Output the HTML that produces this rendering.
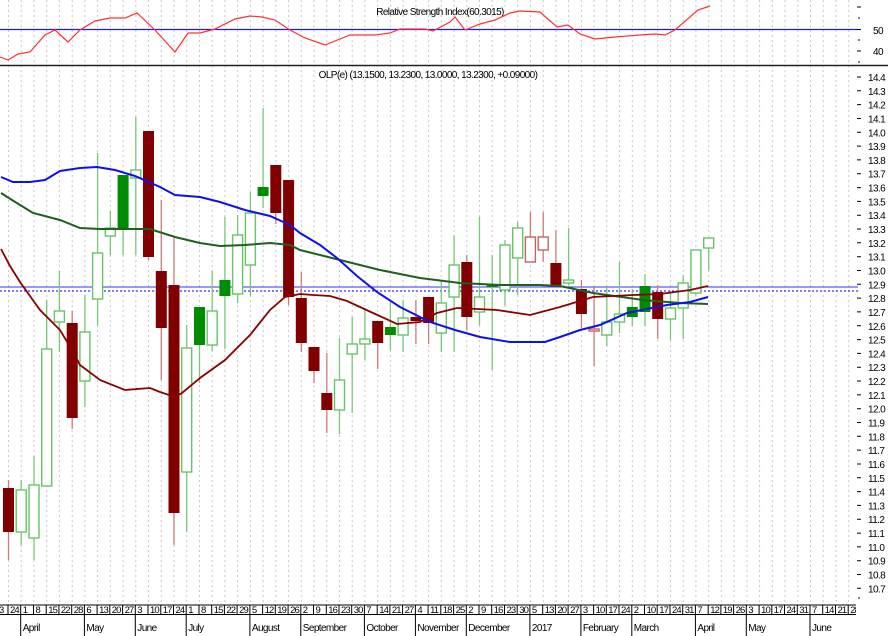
<!DOCTYPE html>
<html><head><meta charset="utf-8"><style>
html,body{margin:0;padding:0;background:#fff;}
svg{display:block;font-family:"Liberation Sans",sans-serif;}
.t{font-size:10px;letter-spacing:-0.6px;fill:#000;}
.d{font-size:9.5px;letter-spacing:-0.9px;fill:#000;}
</style></head><body>
<svg width="888" height="636" viewBox="0 0 888 636" xmlns="http://www.w3.org/2000/svg">
<rect width="888" height="636" fill="#fff"/>
<g stroke="#c8c8c8" stroke-width="1" stroke-dasharray="2,3">
<path d="M8.5 0V605M21.2 0V605M34 0V605M46.7 0V605M59.4 0V605M72.2 0V605M84.9 0V605M97.6 0V605M110.3 0V605M123.1 0V605M135.8 0V605M148.5 0V605M161.3 0V605M174 0V605M186.7 0V605M199.5 0V605M212.2 0V605M224.9 0V605M237.6 0V605M250.4 0V605M263.1 0V605M275.8 0V605M288.6 0V605M301.3 0V605M314 0V605M326.8 0V605M339.5 0V605M352.2 0V605M364.9 0V605M377.7 0V605M390.4 0V605M403.1 0V605M415.9 0V605M428.6 0V605M441.3 0V605M454.1 0V605M466.8 0V605M479.5 0V605M492.2 0V605M505 0V605M517.7 0V605M530.4 0V605M543.2 0V605M555.9 0V605M568.6 0V605M581.4 0V605M594.1 0V605M606.8 0V605M619.5 0V605M632.3 0V605M645 0V605M657.7 0V605M670.5 0V605M683.2 0V605M695.9 0V605M708.7 0V605M721.4 0V605M734.1 0V605M746.9 0V605M759.6 0V605M772.3 0V605M785 0V605M797.8 0V605M810.5 0V605M823.2 0V605M836 0V605M848.7 0V605"/>
</g>
<text x="440" y="15" class="t" text-anchor="middle">Relative Strength Index(60.3015)</text>
<line x1="0" y1="29.5" x2="858" y2="29.5" stroke="#1a1aff" stroke-width="1.2"/>
<polyline fill="none" stroke="#ff3030" stroke-width="1.2" points="0,57 8,60 18,54 30,52 45,35 55,30 68,42 80,30 95,21 110,18 125,18 137,13 155,30 175,52 188,33 200,33 215,29 235,19 250,16 262,17 275,20 290,30 305,38 325,45 350,35 375,35 390,33 400,29 425,29 433,31 450,22 455,17 465,30 480,24 495,20 510,13 520,11 540,12 557,27 568,25 580,34 595,39 615,37 640,35 655,34 665,35 675,30 698,10 710,6"/>
<g stroke="#000" stroke-width="1"><path d="M857 7H861M858 18H860M857 29.5H861M858 40H860M857 51H861M858 62H860"/></g>
<text x="873" y="34" class="t">50</text>
<text x="873" y="55" class="t">40</text>
<line x1="0" y1="65.5" x2="888" y2="65.5" stroke="#222" stroke-width="1.5"/>
<text x="428" y="78" class="t" text-anchor="middle">OLP(e) (13.1500, 13.2300, 13.0000, 13.2300, +0.09000)</text>
<line x1="0" y1="287" x2="858" y2="287" stroke="#3030ff" stroke-width="1"/>
<line x1="0" y1="291" x2="858" y2="291" stroke="#3030ff" stroke-width="1.2" stroke-dasharray="2,2"/>
<g stroke="#d07a7a" stroke-width="1.3">
<path d="M8.5 480V560M72.2 311V429M148.5 131V260M161.3 200V380M174 238V545M275.8 165V224M288.6 180V305M301.3 272V352M314 347V383M326.8 353V433M377.7 321V369M415.9 300V344M428.6 297V344M466.8 255V330M530.4 212V262M543.2 212V262M555.9 230V285M581.4 280V328M594.1 287V366M657.7 285V339"/>
</g>
<g stroke="#78c878" stroke-width="1.3">
<path d="M21.2 480V545M34 456V560M46.7 300V486M59.4 271V352M84.9 295V407M97.6 153V325M110.3 211V255M123.1 175V255M135.8 117V255M186.7 325V532M199.5 307V383M212.2 271V351M224.9 217V349M237.6 215V303M250.4 192V296M263.1 108V208M339.5 338V434M352.2 317V413M364.9 310V360M390.4 302V350M403.1 300V352M441.3 280V352M454.1 235V352M479.5 217V325M492.2 255V370M505 240V306M517.7 222V295M568.6 228V285M606.8 287V346M619.5 262V333M632.3 289V326M645 274V326M670.5 292V340M683.2 275V339M695.9 250V296M708.7 238V270"/>
</g>
<g fill="#800000">
<rect x="3" y="488" width="11" height="44"/>
<rect x="66.7" y="323" width="11" height="95"/>
<rect x="143" y="131" width="11" height="126"/>
<rect x="155.8" y="271" width="11" height="57"/>
<rect x="168.5" y="285" width="11" height="228"/>
<rect x="270.3" y="165" width="11" height="48"/>
<rect x="283.1" y="180" width="11" height="117"/>
<rect x="295.8" y="298" width="11" height="45"/>
<rect x="308.5" y="347" width="11" height="24"/>
<rect x="321.3" y="393" width="11" height="17"/>
<rect x="372.2" y="321" width="11" height="22"/>
<rect x="410.4" y="317" width="11" height="4"/>
<rect x="423.1" y="297" width="11" height="26"/>
<rect x="461.3" y="262" width="11" height="55"/>
<rect x="550.4" y="263" width="11" height="22"/>
<rect x="575.9" y="289" width="11" height="25"/>
<rect x="652.2" y="292" width="11" height="27"/>
</g>
<g fill="#008c00">
<rect x="117.6" y="175" width="11" height="53"/>
<rect x="194" y="307" width="11" height="38"/>
<rect x="219.4" y="280" width="11" height="16"/>
<rect x="257.6" y="187" width="11" height="9"/>
<rect x="384.9" y="327" width="11" height="8"/>
<rect x="486.7" y="284" width="11" height="3"/>
<rect x="626.8" y="307" width="11" height="10"/>
<rect x="639.5" y="286" width="11" height="26"/>
</g>
<g fill="#fff" stroke="#66c466" stroke-width="1.4">
<rect x="16.2" y="490" width="10" height="42"/>
<rect x="29" y="485" width="10" height="53"/>
<rect x="41.7" y="349" width="10" height="137"/>
<rect x="54.4" y="311" width="10" height="11"/>
<rect x="79.9" y="332" width="10" height="49"/>
<rect x="92.6" y="253" width="10" height="46"/>
<rect x="105.3" y="228" width="10" height="8"/>
<rect x="130.8" y="170" width="10" height="8"/>
<rect x="181.7" y="348" width="10" height="124"/>
<rect x="207.2" y="311" width="10" height="34"/>
<rect x="232.6" y="235" width="10" height="59"/>
<rect x="245.4" y="213" width="10" height="52"/>
<rect x="334.5" y="380" width="10" height="30"/>
<rect x="347.2" y="344" width="10" height="10"/>
<rect x="359.9" y="339" width="10" height="5"/>
<rect x="398.1" y="318" width="10" height="17"/>
<rect x="436.3" y="303" width="10" height="30"/>
<rect x="449.1" y="265" width="10" height="32"/>
<rect x="474.5" y="297" width="10" height="15"/>
<rect x="500" y="245" width="10" height="45"/>
<rect x="512.7" y="228" width="10" height="30"/>
<rect x="563.6" y="280" width="10" height="3"/>
<rect x="601.8" y="322" width="10" height="13"/>
<rect x="614.5" y="314" width="10" height="8"/>
<rect x="665.5" y="308" width="10" height="11"/>
<rect x="678.2" y="283" width="10" height="25"/>
<rect x="690.9" y="250" width="10" height="43"/>
<rect x="703.7" y="238" width="10" height="10"/>
</g>
<g fill="#fff" stroke="#c06464" stroke-width="1.4">
<rect x="525.4" y="237" width="10" height="25"/>
<rect x="538.2" y="237" width="10" height="13"/>
<rect x="589.1" y="329" width="10" height="2"/>
</g>
<polyline fill="none" stroke="#1f5f1f" stroke-width="2" points="1,193 12,200 33,213 60,220 80,228 100,229 125,229 150,229 175,237 200,243 220,246 245,245 270,243 290,245 300,250 340,260 380,270 420,278 460,283 500,285 540,285 560,286 593,293 643,300 680,303 708,304"/>
<polyline fill="none" stroke="#8b0000" stroke-width="1.8" points="1,249 10,266 20,282 40,310 60,330 72,350 80,365 100,380 125,390 150,388 160,392 175,397 182,393 200,378 225,360 250,335 270,310 285,297 300,294 313,295 330,296 347,301 373,313 397,324 420,322 437,313 457,308 497,310 530,315 560,307 593,297 633,295 660,294 690,290 708,286"/>
<polyline fill="none" stroke="#1010ee" stroke-width="2" points="1,177 13,182 30,182 45,180 60,171 80,168 97,167 115,170 135,176 160,187 175,195 200,197 220,202 245,210 270,216 290,225 300,233 320,245 337,258 357,276 377,292 400,307 430,322 455,330 480,337 510,342 530,342 545,342 560,337 580,330 600,325 627,313 667,305 690,302 708,297"/>
<g stroke="#000" stroke-width="1">
<path d="M857 77H861M857 90.8H861M857 104.6H861M857 118.5H861M857 132.3H861M857 146.1H861M857 159.9H861M857 173.7H861M857 187.6H861M857 201.4H861M857 215.2H861M857 229H861M857 242.8H861M857 256.7H861M857 270.5H861M857 284.3H861M857 298.1H861M857 311.9H861M857 325.8H861M857 339.6H861M857 353.4H861M857 367.2H861M857 381H861M857 394.9H861M857 408.7H861M857 422.5H861M857 436.3H861M857 450.1H861M857 464H861M857 477.8H861M857 491.6H861M857 505.4H861M857 519.2H861M857 533.1H861M857 546.9H861M857 560.7H861M857 574.5H861M857 588.3H861M858 598H860"/>
</g>
<g class="t">
<text x="868" y="81">14.4</text><text x="868" y="94.8">14.3</text><text x="868" y="108.6">14.2</text><text x="868" y="122.5">14.1</text><text x="868" y="136.3">14.0</text><text x="868" y="150.1">13.9</text><text x="868" y="163.9">13.8</text><text x="868" y="177.7">13.7</text><text x="868" y="191.6">13.6</text><text x="868" y="205.4">13.5</text><text x="868" y="219.2">13.4</text><text x="868" y="233">13.3</text><text x="868" y="246.8">13.2</text><text x="868" y="260.7">13.1</text><text x="868" y="274.5">13.0</text><text x="868" y="288.3">12.9</text><text x="868" y="302.1">12.8</text><text x="868" y="315.9">12.7</text><text x="868" y="329.8">12.6</text><text x="868" y="343.6">12.5</text><text x="868" y="357.4">12.4</text><text x="868" y="371.2">12.3</text><text x="868" y="385">12.2</text><text x="868" y="398.9">12.1</text><text x="868" y="412.7">12.0</text><text x="868" y="426.5">11.9</text><text x="868" y="440.3">11.8</text><text x="868" y="454.1">11.7</text><text x="868" y="468">11.6</text><text x="868" y="481.8">11.5</text><text x="868" y="495.6">11.4</text><text x="868" y="509.4">11.3</text><text x="868" y="523.2">11.2</text><text x="868" y="537.1">11.1</text><text x="868" y="550.9">11.0</text><text x="868" y="564.7">10.9</text><text x="868" y="578.5">10.8</text><text x="868" y="592.3">10.7</text>
</g>
<line x1="0" y1="605" x2="856" y2="605" stroke="#000" stroke-width="1"/>
<line x1="0" y1="614.5" x2="856" y2="614.5" stroke="#000" stroke-width="1"/>
<g transform="translate(1,0)">
<g stroke="#000" stroke-width="1">
<path d="M7 605V614M19.7 605V614M32.5 605V614M45.2 605V614M57.9 605V614M70.7 605V614M83.4 605V614M96.1 605V614M108.8 605V614M121.6 605V614M134.3 605V614M147 605V614M159.8 605V614M172.5 605V614M185.2 605V614M198 605V614M210.7 605V614M223.4 605V614M236.1 605V614M248.9 605V614M261.6 605V614M274.3 605V614M287.1 605V614M299.8 605V614M312.5 605V614M325.3 605V614M338 605V614M350.7 605V614M363.4 605V614M376.2 605V614M388.9 605V614M401.6 605V614M414.4 605V614M427.1 605V614M439.8 605V614M452.6 605V614M465.3 605V614M478 605V614M490.7 605V614M503.5 605V614M516.2 605V614M528.9 605V614M541.7 605V614M554.4 605V614M567.1 605V614M579.9 605V614M592.6 605V614M605.3 605V614M618 605V614M630.8 605V614M643.5 605V614M656.2 605V614M669 605V614M681.7 605V614M694.4 605V614M707.2 605V614M719.9 605V614M732.6 605V614M745.3 605V614M758.1 605V614M770.8 605V614M783.5 605V614M796.3 605V614M809 605V614M821.7 605V614M834.5 605V614M847.2 605V614"/>
<path d="M19.7 615V636M83.4 615V636M134.3 615V636M185.2 615V636M248.9 615V636M299.8 615V636M363.4 615V636M414.4 615V636M465.3 615V636M528.9 615V636M579.9 615V636M630.8 615V636M694.4 615V636M745.3 615V636M809 615V636"/>
</g>
<g class="d">
<text x="-2" y="613">3</text>
<text x="9" y="613">24</text><text x="21.7" y="613">1</text><text x="34.5" y="613">8</text><text x="47.2" y="613">15</text><text x="59.9" y="613">22</text><text x="72.7" y="613">28</text><text x="85.4" y="613">6</text><text x="98.1" y="613">13</text><text x="110.8" y="613">20</text><text x="123.6" y="613">27</text><text x="136.3" y="613">3</text><text x="149" y="613">10</text><text x="161.8" y="613">17</text><text x="174.5" y="613">24</text><text x="187.2" y="613">1</text><text x="200" y="613">8</text><text x="212.7" y="613">15</text><text x="225.4" y="613">22</text><text x="238.1" y="613">29</text><text x="250.9" y="613">5</text><text x="263.6" y="613">12</text><text x="276.3" y="613">19</text><text x="289.1" y="613">26</text><text x="301.8" y="613">2</text><text x="314.5" y="613">9</text><text x="327.3" y="613">16</text><text x="340" y="613">23</text><text x="352.7" y="613">30</text><text x="365.4" y="613">7</text><text x="378.2" y="613">14</text><text x="390.9" y="613">21</text><text x="403.6" y="613">27</text><text x="416.4" y="613">4</text><text x="429.1" y="613">11</text><text x="441.8" y="613">18</text><text x="454.6" y="613">25</text><text x="467.3" y="613">2</text><text x="480" y="613">9</text><text x="492.7" y="613">16</text><text x="505.5" y="613">23</text><text x="518.2" y="613">30</text><text x="530.9" y="613">5</text><text x="543.7" y="613">13</text><text x="556.4" y="613">20</text><text x="569.1" y="613">27</text><text x="581.9" y="613">3</text><text x="594.6" y="613">10</text><text x="607.3" y="613">17</text><text x="620" y="613">24</text><text x="632.8" y="613">2</text><text x="645.5" y="613">10</text><text x="658.2" y="613">17</text><text x="671" y="613">24</text><text x="683.7" y="613">31</text><text x="696.4" y="613">7</text><text x="709.2" y="613">12</text><text x="721.9" y="613">19</text><text x="734.6" y="613">26</text><text x="747.3" y="613">3</text><text x="760.1" y="613">10</text><text x="772.8" y="613">17</text><text x="785.5" y="613">24</text><text x="798.3" y="613">31</text><text x="811" y="613">7</text><text x="823.7" y="613">14</text><text x="836.5" y="613">21</text><text x="849.2" y="613">28</text>
</g>
<g class="t">
<text x="21.7" y="631">April</text><text x="85.4" y="631">May</text><text x="136.3" y="631">June</text><text x="187.2" y="631">July</text><text x="250.9" y="631">August</text><text x="301.8" y="631">September</text><text x="365.4" y="631">October</text><text x="416.4" y="631">November</text><text x="467.3" y="631">December</text><text x="530.9" y="631">2017</text><text x="581.9" y="631">February</text><text x="632.8" y="631">March</text><text x="696.4" y="631">April</text><text x="747.3" y="631">May</text><text x="811" y="631">June</text>
</g>
</g>
<rect x="856" y="604" width="32" height="32" fill="#fff"/>
</svg>
</body></html>
